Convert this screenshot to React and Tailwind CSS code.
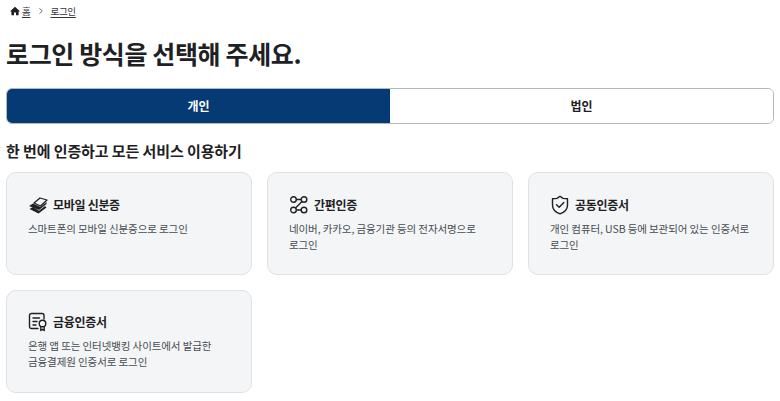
import { ChevronRight } from 'lucide-react';

const font = { fontFamily: '"Noto Sans CJK KR", "Noto Sans", sans-serif' };

function PhoneStackIcon() {
    return (
        <svg width="20" height="20" viewBox="0 0 20 20" fill="none" className="shrink-0">
            <path d="M1.5 14 L5 12 L11 15.8 L17 11 L18.5 12.5 L10.5 18.5 Z" fill="#1e2124" />
            <path d="M1 11 L5 8.5 L12.5 12 L18.5 7 L18.5 9 L11 15 Z" fill="#1e2124" />
            <path d="M6 8 L12 3 L19 5 L12.5 11 Z" fill="#f4f5f6" stroke="#1e2124" strokeWidth="1.3" strokeLinejoin="round" />
        </svg>
    );
}

function LinkNodesIcon() {
    return (
        <svg width="20" height="20" viewBox="0 0 20 20" fill="none" stroke="#1e2124" strokeWidth="1.4" className="shrink-0">
            <circle cx="4.5" cy="4.5" r="2.8" />
            <circle cx="15" cy="4.5" r="2.8" />
            <circle cx="4.5" cy="15" r="2.8" />
            <circle cx="15" cy="15" r="2.8" />
            <path d="M7.3 4.5 H12.2 M7.3 15 H12.2 M13 6.5 L6.5 13" />
        </svg>
    );
}

function ShieldCheckIcon() {
    return (
        <svg width="20" height="20" viewBox="0 0 20 20" fill="none" stroke="#1e2124" strokeWidth="1.4" strokeLinejoin="round" strokeLinecap="round" className="shrink-0">
            <path d="M10 1.2 L13 3.4 L17.5 3.8 V10 C17.5 14.5 14 17.5 10 18.8 C6 17.5 2.5 14.5 2.5 10 V3.8 L7 3.4 Z" />
            <path d="M6.5 9.8 L9.2 12.3 L13.8 7.6" />
        </svg>
    );
}

function CertificateIcon() {
    return (
        <svg width="20" height="20" viewBox="0 0 20 20" fill="none" stroke="#1e2124" strokeWidth="1.4" strokeLinecap="round" strokeLinejoin="round" className="shrink-0">
            <path d="M10 16.5 H3.5 A2 2 0 0 1 1.5 14.5 V3.5 A2 2 0 0 1 3.5 1.5 H14 A2 2 0 0 1 16 3.5 V7" />
            <path d="M5 6 H11.5 M5 9.5 H9 M5 13 H8" />
            <circle cx="14.5" cy="11.5" r="3.3" />
            <path d="M12.8 14.5 V18.5 L14.5 17.3 L16.2 18.5 V14.5" />
        </svg>
    );
}

const methods = [
    { icon: <PhoneStackIcon />, title: '모바일 신분증', desc: '스마트폰의 모바일 신분증으로 로그인' },
    { icon: <LinkNodesIcon />, title: '간편인증', desc: '네이버, 카카오, 금융기관 등의 전자서명으로 로그인' },
    { icon: <ShieldCheckIcon />, title: '공동인증서', desc: '개인 컴퓨터, USB 등에 보관되어 있는 인증서로 로그인' },
    { icon: <CertificateIcon />, title: '금융인증서', desc: '은행 앱 또는 인터넷뱅킹 사이트에서 발급한 금융결제원 인증서로 로그인' },
];

export default function App() {
    return (
        <div style={font} className="h-[401px] overflow-hidden bg-white px-[6px] text-[#1e2124]">
            {/* Breadcrumb */}
            <nav className="flex h-[22px] items-center pl-[4px] text-[9.5px] tracking-[-0.3px] text-[#33363d]">
                <svg width="10" height="10" viewBox="0 0 10 10" className="mr-[2px]" fill="#1e2124">
                    <path d="M5 .8 L9.6 4.9 V5.4 H8.6 V9.2 H6 V6.4 H4 V9.2 H1.4 V5.4 H.4 V4.9 Z" />
                </svg>
                <span className="underline underline-offset-2">홈</span>
                <ChevronRight className="mr-[4px] ml-[6px] h-[10px] w-[10px] text-[#464c53]" />
                <span className="underline underline-offset-2">로그인</span>
            </nav>

            <h1 className="mt-[12px] h-[38px] text-[25px] leading-[38px] font-bold tracking-[-0.375px]">로그인 방식을 선택해 주세요.</h1>

            {/* Tabs */}
            <div className="mt-[16px] flex h-[36px] overflow-hidden rounded-[6px] border border-[#b1b8be] text-[12px] font-bold">
                <div className="flex flex-1 items-center justify-center bg-[#063a74] text-white">개인</div>
                <div className="flex flex-1 items-center justify-center bg-white">법인</div>
            </div>

            <h2 className="mt-[16px] h-[22px] text-[15px] leading-[22px] font-bold tracking-[-0.1px]">한 번에 인증하고 모든 서비스 이용하기</h2>

            {/* Login methods */}
            <div className="mt-[10px] grid grid-cols-3 gap-[15px]">
                {methods.map((m, i) => (
                    <div key={m.title} className={`h-[103px] rounded-[10px] border border-[#dfe1e4] bg-[#f4f5f6] px-[21px] ${i === 3 ? 'pt-[21px]' : 'pt-[22px]'}`}>
                        <div className="flex h-[20px] items-center gap-[5px]">
                            {m.icon}
                            <span className="text-[12px] font-bold tracking-[-0.3px]">{m.title}</span>
                        </div>
                        <p className="mt-[6px] break-keep text-[10.5px] leading-[16px] tracking-[-0.1px] text-[#464c53]">{m.desc}</p>
                    </div>
                ))}
            </div>
        </div>
    );
}
